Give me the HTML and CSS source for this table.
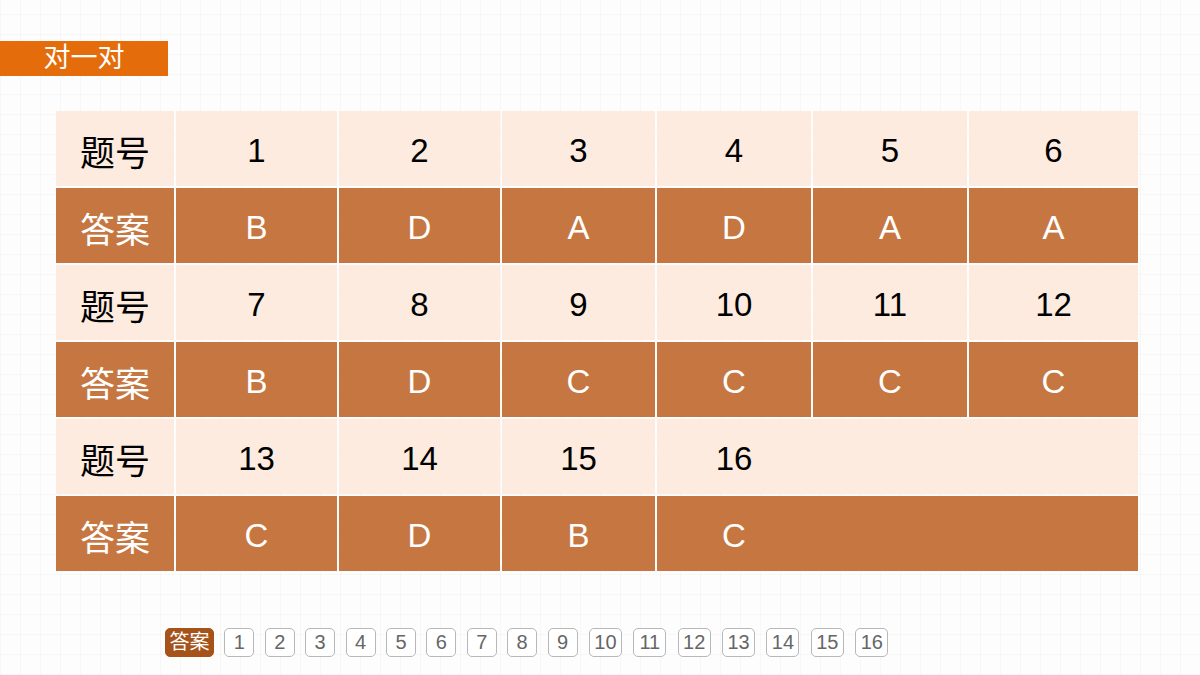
FILE: index.html
```html
<!DOCTYPE html>
<html lang="zh">
<head>
<meta charset="utf-8">
<link rel="stylesheet" href="styles.css">
</head>
<body>
<div class="page">
  <div class="tab">对一对</div>
  <div class="grid">
    <div class="c lt h">题号</div><div class="c lt">1</div><div class="c lt">2</div><div class="c lt">3</div><div class="c lt">4</div><div class="c lt">5</div><div class="c lt">6</div>
    <div class="c dk h">答案</div><div class="c dk">B</div><div class="c dk">D</div><div class="c dk">A</div><div class="c dk">D</div><div class="c dk">A</div><div class="c dk">A</div>
    <div class="c lt h">题号</div><div class="c lt">7</div><div class="c lt">8</div><div class="c lt">9</div><div class="c lt">10</div><div class="c lt">11</div><div class="c lt">12</div>
    <div class="c dk h">答案</div><div class="c dk">B</div><div class="c dk">D</div><div class="c dk">C</div><div class="c dk">C</div><div class="c dk">C</div><div class="c dk">C</div>
    <div class="c lt h">题号</div><div class="c lt">13</div><div class="c lt">14</div><div class="c lt">15</div><div class="c lt span"><span class="sub">16</span></div>
    <div class="c dk h">答案</div><div class="c dk">C</div><div class="c dk">D</div><div class="c dk">B</div><div class="c dk span"><span class="sub">C</span></div>
  </div>
  <div class="nav">
    <span class="btn ans">答案</span>
    <span class="btn">1</span><span class="btn">2</span><span class="btn">3</span><span class="btn">4</span><span class="btn">5</span><span class="btn">6</span><span class="btn">7</span><span class="btn">8</span><span class="btn">9</span>
    <span class="btn w">10</span><span class="btn w">11</span><span class="btn w">12</span><span class="btn w">13</span><span class="btn w">14</span><span class="btn w">15</span><span class="btn w">16</span>
  </div>
</div>
</body>
</html>
```
FILE: styles.css
```css
html, body {
  margin: 0;
  padding: 0;
}
body {
  width: 1200px;
  height: 675px;
  overflow: hidden;
  background-color: #fdfdfd;
  background-image:
    repeating-linear-gradient(0deg, rgba(0,0,0,0.025) 0 1px, transparent 1px 20px),
    repeating-linear-gradient(90deg, rgba(0,0,0,0.025) 0 1px, transparent 1px 20px);
  font-family: "Liberation Sans", "Noto Sans CJK SC", sans-serif;
}
.page {
  padding-top: 41px;
}
.tab {
  width: 168px;
  height: 35px;
  background: #e46c0a;
  color: #fff;
  font-size: 27px;
  line-height: 35px;
  text-align: center;
}
.grid {
  margin: 35px 0 0 56px;
  width: 1082px;
  display: grid;
  grid-template-columns: 118px 161px 161px 153px 154px 154px 169px;
  grid-auto-rows: 75px;
  column-gap: 2px;
  row-gap: 2px;
}
.c {
  display: flex;
  align-items: center;
  justify-content: center;
  padding-top: 4px;
  box-sizing: border-box;
  font-size: 33px;
}
.lt {
  background: #fcebde;
  color: #000;
}
.dk {
  background: #c67741;
  color: #fff;
}
.h {
  font-size: 35px;
}
.span {
  grid-column: span 3;
  justify-content: flex-start;
}
.sub {
  width: 154px;
  text-align: center;
}
.nav {
  margin: 57px 0 0 165px;
  display: flex;
  gap: 10.4px;
  height: 29px;
}
.btn {
  box-sizing: border-box;
  width: 30px;
  height: 29px;
  border: 1px solid #b8b8b8;
  border-radius: 5px;
  background: #fff;
  color: #666;
  font-size: 20px;
  line-height: 27px;
  text-align: center;
}
.btn.w {
  width: 33px;
  margin-left: 1px;
}
.btn.ans {
  width: 49px;
  background: #a5531b;
  border-color: #a5531b;
  color: #fff;
  font-size: 20px;
}
```
